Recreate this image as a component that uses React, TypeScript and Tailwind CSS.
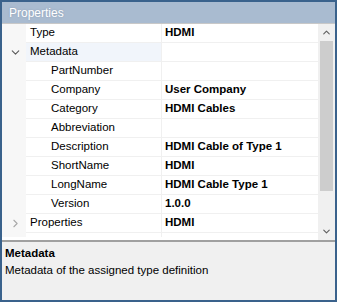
import { ChevronDown, ChevronRight, ChevronUp } from 'lucide-react';

type Row = {
  name: string;
  value?: string;
  level: 0 | 1;
  expander?: 'open' | 'closed';
  selected?: boolean;
};

const ROWS: Row[] = [
  { name: 'Type', value: 'HDMI', level: 0 },
  { name: 'Metadata', level: 0, expander: 'open', selected: true },
  { name: 'PartNumber', level: 1 },
  { name: 'Company', value: 'User Company', level: 1 },
  { name: 'Category', value: 'HDMI Cables', level: 1 },
  { name: 'Abbreviation', level: 1 },
  { name: 'Description', value: 'HDMI Cable of Type 1', level: 1 },
  { name: 'ShortName', value: 'HDMI', level: 1 },
  { name: 'LongName', value: 'HDMI Cable Type 1', level: 1 },
  { name: 'Version', value: '1.0.0', level: 1 },
  { name: 'Properties', value: 'HDMI', level: 0, expander: 'closed' },
  { name: 'Location', value: 'Default', level: 0 },
];

function GridRow({ row }: { row: Row }) {
  return (
    <div className="flex h-[19px] shrink-0">
      {/* gutter with expander */}
      <div className="w-[24px] shrink-0 bg-[#f7f7f7] flex items-center justify-center">
        {row.expander === 'open' && <ChevronDown size={13} strokeWidth={2} className="text-[#5a5a5a] ml-[2px]" />}
        {row.expander === 'closed' && <ChevronRight size={13} strokeWidth={2} className="text-[#a8a8a8] ml-[2px]" />}
      </div>
      <div
        className={`w-[135px] shrink-0 border-b border-[#f0f0f0] flex items-center ${
          row.selected ? 'bg-[#f1f5fb]' : 'bg-white'
        } ${row.level === 1 ? 'pl-[25px]' : 'pl-[4px]'}`}
      >
        <span className="text-[11.5px] text-black whitespace-nowrap">{row.name}</span>
      </div>
      <div className="w-px shrink-0 bg-[#f0f0f0]" />
      <div className="w-[156px] shrink-0 border-b border-[#f0f0f0] bg-white flex items-center pl-[3px]">
        <span className="text-[11.5px] font-bold text-black whitespace-nowrap">{row.value}</span>
      </div>
    </div>
  );
}

export default function App() {
  return (
    <div className="w-[340px] h-[306px] bg-white" style={{ fontFamily: '"Liberation Sans", Arial, sans-serif' }}>
      <div className="w-[337px] h-[302px] border-2 border-[#3a628c] flex flex-col bg-white">
        {/* title bar */}
        <div className="h-[21px] shrink-0 bg-[#a9bbd0] flex items-center pl-[7px]">
          <span className="text-[12px] text-white [text-shadow:0_0_2px_#8a9db3]">Properties</span>
        </div>
        <div className="h-px shrink-0 bg-[#c8c8c8]" />

        {/* grid */}
        <div className="h-[216px] shrink-0 flex overflow-hidden">
          <div className="flex flex-col overflow-hidden h-[213px]">
            {ROWS.map((r) => (
              <GridRow key={r.name} row={r} />
            ))}
          </div>
          {/* scrollbar */}
          <div className="w-[17px] shrink-0 bg-[#f0f0f0] flex flex-col">
            <div className="h-[17px] shrink-0 flex items-center justify-center">
              <ChevronUp size={11} strokeWidth={2.5} className="text-[#606060]" />
            </div>
            <div className="flex-1 flex flex-col px-[2px]">
              <div className="h-[150px] bg-[#cdcdcd]" />
            </div>
            <div className="h-[17px] shrink-0 flex items-center justify-center">
              <ChevronDown size={11} strokeWidth={2.5} className="text-[#606060]" />
            </div>
          </div>
        </div>

        {/* splitter */}
        <div className="h-[2px] shrink-0 bg-[#a0a0a0]" />

        {/* description panel */}
        <div className="flex-1 bg-[#f0f0f0] px-[3px] pt-[3px] flex flex-col">
          <span className="text-[11.5px] font-bold text-black leading-[17px]">Metadata</span>
          <span className="text-[11.5px] text-black leading-[17px]">Metadata of the assigned type definition</span>
        </div>
      </div>
    </div>
  );
}
